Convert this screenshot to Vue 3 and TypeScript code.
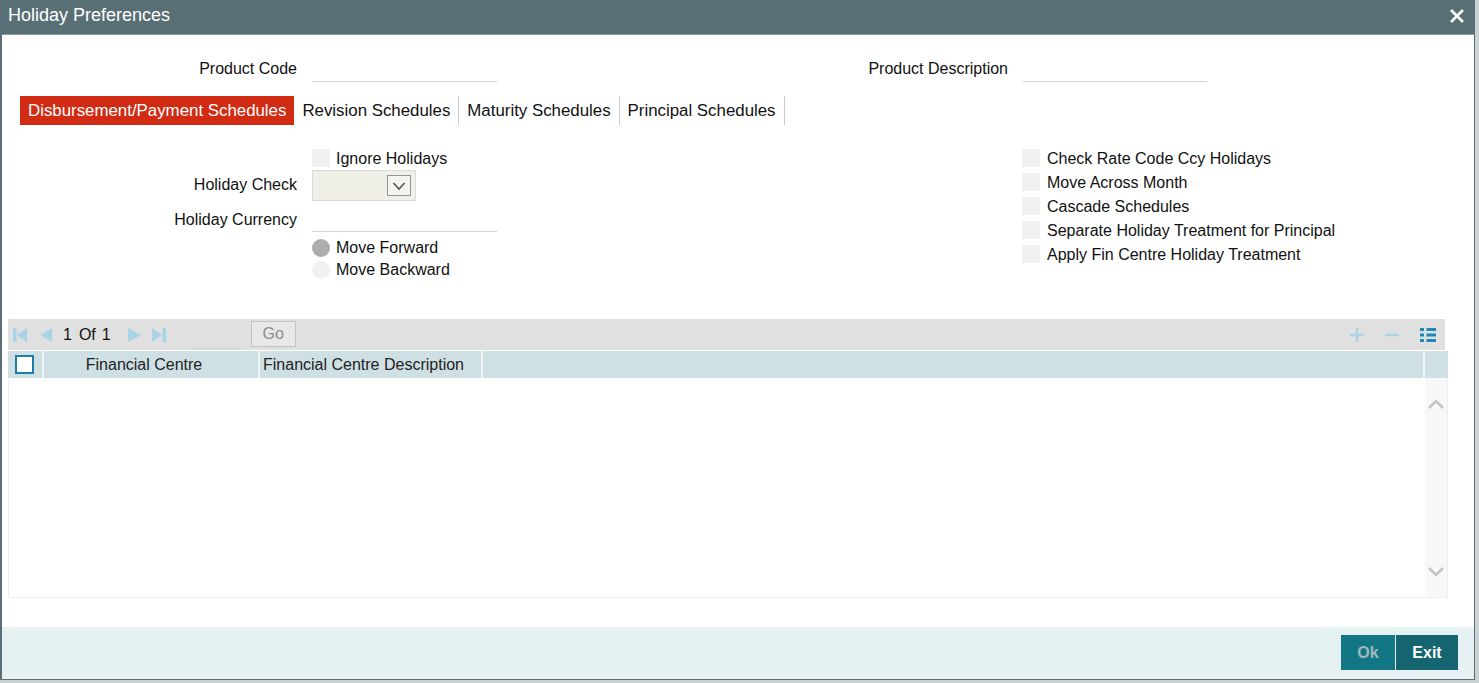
<script setup lang="ts">
const tabs: string[] = ['Disbursement/Payment Schedules', 'Revision Schedules', 'Maturity Schedules', 'Principal Schedules']
const rightChecks: string[] = ['Check Rate Code Ccy Holidays', 'Move Across Month', 'Cascade Schedules', 'Separate Holiday Treatment for Principal', 'Apply Fin Centre Holiday Treatment']
</script>

<template>
  <div class="page">
    <div class="win">
      <header class="title">
        <span>Holiday Preferences</span>
        <svg class="close" width="16" height="16" viewBox="0 0 16 16"><path d="M2 2 14 14M14 2 2 14" stroke="#fff" stroke-width="2.6" fill="none" /></svg>
      </header>

      <main class="content">
        <section class="product">
          <label class="lab lab1">Product Code</label>
          <div class="line w185"></div>
          <label class="lab lab2">Product Description</label>
          <div class="line w184"></div>
        </section>

        <nav class="tabs">
          <div v-for="(t, i) in tabs" :key="t" class="tab" :class="{ active: i === 0 }">{{ t }}</div>
        </nav>

        <section class="form">
          <div class="left">
            <div class="row r-check">
              <span class="lab lab1"></span>
              <span class="box"></span><span class="opt shift">Ignore Holidays</span>
            </div>
            <div class="row r-select">
              <span class="lab lab1">Holiday Check</span>
              <div class="select">
                <span class="arrow">
                  <svg width="14" height="10" viewBox="0 0 14 10"><path d="M1.500 2 7 8 12.500 2" stroke="#555" stroke-width="1.600" fill="none" /></svg>
                </span>
              </div>
            </div>
            <div class="row r-cur">
              <span class="lab lab1">Holiday Currency</span>
              <div class="line w185"></div>
            </div>
            <div class="row r-radio first">
              <span class="lab lab1"></span>
              <span class="radio on"></span><span class="opt">Move Forward</span>
            </div>
            <div class="row r-radio">
              <span class="lab lab1"></span>
              <span class="radio"></span><span class="opt">Move Backward</span>
            </div>
          </div>
          <div class="right">
            <div v-for="c in rightChecks" :key="c" class="rcheck">
              <span class="box"></span><span class="opt shift wide">{{ c }}</span>
            </div>
          </div>
        </section>

        <section class="grid">
          <div class="toolbar">
            <div class="pager">
              <svg class="ic first-ic" width="14" height="16" viewBox="0 0 14 16"><path d="M0 1h3.500v14H0zM14 1v14L4 8z" fill="#a9d3e6" /></svg>
              <svg class="ic prev" width="13" height="16" viewBox="0 0 13 16"><path d="M13 1v14L1 8z" fill="#a9d3e6" /></svg>
              <span class="pg p1">1</span><span class="pg p2">Of</span><span class="pg p3">1</span>
              <svg class="ic next" width="13" height="16" viewBox="0 0 13 16"><path d="M0 1v14l13-7z" fill="#a9d3e6" /></svg>
              <svg class="ic last" width="14" height="16" viewBox="0 0 14 16"><path d="M0 1v14l10-7zM10.500 1H14v14h-3.500z" fill="#a9d3e6" /></svg>
              <div class="pageinput"></div>
              <div class="go">Go</div>
            </div>
            <div class="actions">
              <svg width="14" height="14" viewBox="0 0 14 14"><path d="M7 0v14M0 7h14" stroke="#a9d3e6" stroke-width="2.400" /></svg>
              <svg width="14" height="14" viewBox="0 0 14 14"><path d="M0 7h14" stroke="#a9d3e6" stroke-width="2.400" /></svg>
              <svg width="16" height="14" viewBox="0 0 16 14"><path d="M0 1.500h4M6.500 1.500H16M0 7h4M6.500 7H16M0 12.500h4M6.500 12.500H16" stroke="#1f88bb" stroke-width="2.800" /></svg>
            </div>
          </div>

          <div class="table">
            <div class="thead">
              <div class="th c0"><span class="hbox"></span></div>
              <div class="th c1">Financial Centre</div>
              <div class="th c2">Financial Centre Description</div>
              <div class="th c3"></div>
              <div class="th c4"></div>
            </div>
            <div class="tbody">
              <div class="rows"></div>
              <div class="scroll">
                <svg width="18" height="12" viewBox="0 0 18 12"><path d="M2 10 9 3 16 10" stroke="#c4c4c4" stroke-width="2.600" fill="none" /></svg>
                <svg width="18" height="12" viewBox="0 0 18 12"><path d="M2 2 9 9 16 2" stroke="#c4c4c4" stroke-width="2.600" fill="none" /></svg>
              </div>
            </div>
          </div>
        </section>
      </main>

      <footer class="foot">
        <button class="btn ok" type="button">Ok</button>
        <button class="btn exit" type="button">Exit</button>
      </footer>
    </div>
  </div>
</template>

<style>
html, body { margin: 0; background: #c9d1d3; }
</style>

<style scoped>
.page {
  width: 1479px;
  height: 683px;
  overflow: hidden;
  font-family: "Liberation Sans", Arial, sans-serif;
  font-size: 16px;
  color: #111;
  background: #c9d1d3;
}
.win {
  width: 1475px;
  height: 680px;
  box-sizing: border-box;
  border: 2px solid #5a7076;
  border-width: 0 1px 1px 2px;
  background: #fff;
  display: flex;
  flex-direction: column;
}
.title {
  height: 30px;
  flex: none;
  background: #586f75;
  border-bottom: 1px solid #8a9ca1;
  color: #fff;
  font-size: 18px;
  display: flex;
  align-items: center;
  justify-content: space-between;
  padding: 0 9px 4px 6px;
}
.close { margin-top: 2px; }
.content { flex: 1; min-height: 0; }
.product {
  display: flex;
  align-items: flex-start;
  height: 61px;
  padding-top: 20px;
  box-sizing: border-box;
}
.lab { text-align: right; line-height: 28px; flex: none; white-space: nowrap; }
.lab1 { width: 295px; margin-right: 15px; }
.lab2 { width: 511px; margin-right: 15px; }
.line { height: 26px; border-bottom: 1px solid #cfd3d5; flex: none; }
.w185 { width: 185px; }
.w184 { width: 184px; }

.tabs { display: flex; height: 29px; padding-left: 18px; font-size: 16.85px; }
.tab {
  line-height: 29px;
  padding: 0 8px;
  border-right: 1px solid #c9cdcf;
  white-space: nowrap;
}
.tab.active {
  background: #d12b13;
  color: #fff;
  border-right: 0;
}

.form { display: flex; height: 194px; padding-top: 24px; box-sizing: border-box; }
.left { width: 1020px; flex: none; }
.row { display: flex; align-items: center; }
.r-check { height: 18px; margin-bottom: 3px; }
.r-select { height: 31px; }
.r-select .lab { margin-bottom: 2px; }
.r-cur { height: 31px; align-items: flex-end; }
.r-cur .line { height: 30px; }
.r-cur .lab { align-self: flex-start; margin-top: 5px; }
.r-radio { height: 22px; }
.r-radio.first { margin-top: 5px; }
.box { width: 18px; height: 18px; background: #f1f1f1; flex: none; }
.opt { margin-left: 6px; white-space: nowrap; line-height: 18px; }
.opt.shift { padding-top: 2px; }
.opt.wide { margin-left: 7px; }
.radio { width: 18px; height: 18px; border-radius: 50%; background: #f1f1f1; flex: none; }
.radio.on { background: #adadad; }
.select {
  width: 104px;
  height: 31px;
  box-sizing: border-box;
  background: #f0f0e8;
  border: 1px solid #dcdcd6;
  display: flex;
  align-items: center;
  justify-content: flex-end;
  padding-right: 4px;
}
.arrow {
  width: 24px;
  height: 21px;
  box-sizing: border-box;
  border: 1px solid #949494;
  background: #f4f4f0;
  display: flex;
  align-items: center;
  justify-content: center;
}
.right { display: flex; flex-direction: column; }
.rcheck { height: 24px; display: flex; align-items: center; }
.rcheck:first-child { margin-top: -3px; }

.grid { margin-left: 6px; }
.toolbar {
  width: 1437px;
  height: 31px;
  background: #e0e0e0;
  display: flex;
  align-items: center;
  justify-content: space-between;
}
.pager { display: flex; align-items: center; height: 100%; padding-left: 5px; }
.ic { flex: none; }
.prev { margin-left: 12px; }
.pg { line-height: 31px; }
.p1 { margin-left: 11px; }
.p2 { margin-left: 7px; }
.p3 { margin-left: 6px; }
.next { margin-left: 17px; }
.last { margin-left: 11px; }
.pageinput { width: 51px; height: 28px; border-bottom: 1px solid #d2d2d2; margin-left: 24px; }
.go {
  width: 45px;
  height: 26px;
  box-sizing: border-box;
  border: 1px solid #c2c2c2;
  background: #e8e8e8;
  color: #8c8c8c;
  text-align: center;
  line-height: 23px;
  margin-left: 10px;
  margin-bottom: 1px;
}
.actions { display: flex; align-items: center; gap: 21px; padding-right: 9px; }
.table { width: 1440px; margin-top: 1px; }
.thead { display: flex; height: 27px; background: #cfe0e4; }
.th { line-height: 27px; border-right: 2px solid #eef4f5; box-sizing: border-box; white-space: nowrap; color: #222; }
.c0 { width: 36px; display: flex; align-items: center; padding-left: 7px; }
.hbox { width: 19px; height: 19px; box-sizing: border-box; border: 2px solid #1f7ea8; background: #fff; }
.c1 { width: 216px; text-align: center; padding-right: 14px; }
.c2 { width: 223px; padding-left: 3px; }
.c3 { width: 942px; }
.c4 { flex: 1; border-right: 0; }
.tbody {
  height: 220px;
  box-sizing: border-box;
  border: 1px solid #eeeeee;
  border-top: 0;
  display: flex;
}
.rows { flex: 1; }
.scroll {
  width: 22px;
  background: #f8f8f8;
  display: flex;
  flex-direction: column;
  align-items: center;
  justify-content: space-between;
  padding: 20px 0 19px;
  box-sizing: border-box;
}
.foot {
  height: 52px;
  flex: none;
  background: #e6f1f4;
  display: flex;
  align-items: flex-start;
  justify-content: flex-end;
  padding: 8px 16px 0 0;
  box-sizing: border-box;
  gap: 1px;
}
.btn {
  height: 35px;
  border: 0;
  padding: 0;
  font: bold 16px "Liberation Sans", Arial, sans-serif;
  background: #14656f;
  color: #fff;
}
.ok { width: 54px; background: #137684; color: #9fb9bd; }
.exit { width: 62px; }
</style>
